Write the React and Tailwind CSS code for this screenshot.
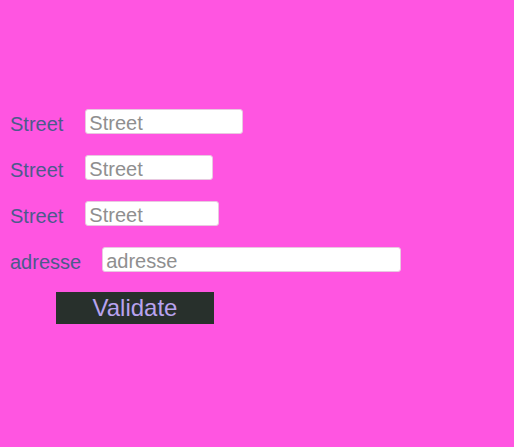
import React from 'react';

export default function App() {
    const fields = [
        { label: 'Street', width: 'w-[158px]', gap: 'ml-[22px]' },
        { label: 'Street', width: 'w-[128px]', gap: 'ml-[22px]' },
        { label: 'Street', width: 'w-[134px]', gap: 'ml-[22px]' },
        { label: 'adresse', width: 'w-[299px]', gap: 'ml-[21px]' },
    ];

    return (
        <div className="w-[514px] h-[447px] bg-[#ff55e1] font-['Liberation_Sans',Arial,sans-serif] pt-[109px] pl-[10px]">
            <div className="flex flex-col gap-[22px]">
                {fields.map((f, i) => (
                    <div key={i} className="flex items-start h-[24px]">
                        <span className="mt-[3px] text-[20px] leading-[24px] text-[#4c5a8c]">{f.label}</span>
                        <input
                            placeholder={f.label}
                            className={`${f.gap} ${f.width} h-[25px] bg-white border border-[#e8c8e0] rounded-[3px] pl-[3px] pr-[3px] pt-[4px] pb-0 text-[20px] leading-[20px] placeholder:text-[#8f8f8f] outline-none`}
                        />
                    </div>
                ))}
            </div>
            <button className="ml-[46px] mt-[21px] w-[158px] h-[32px] bg-[#28302c] text-[#b8a3ef] text-[24px] leading-[32px] text-center">
                Validate
            </button>
        </div>
    );
}
